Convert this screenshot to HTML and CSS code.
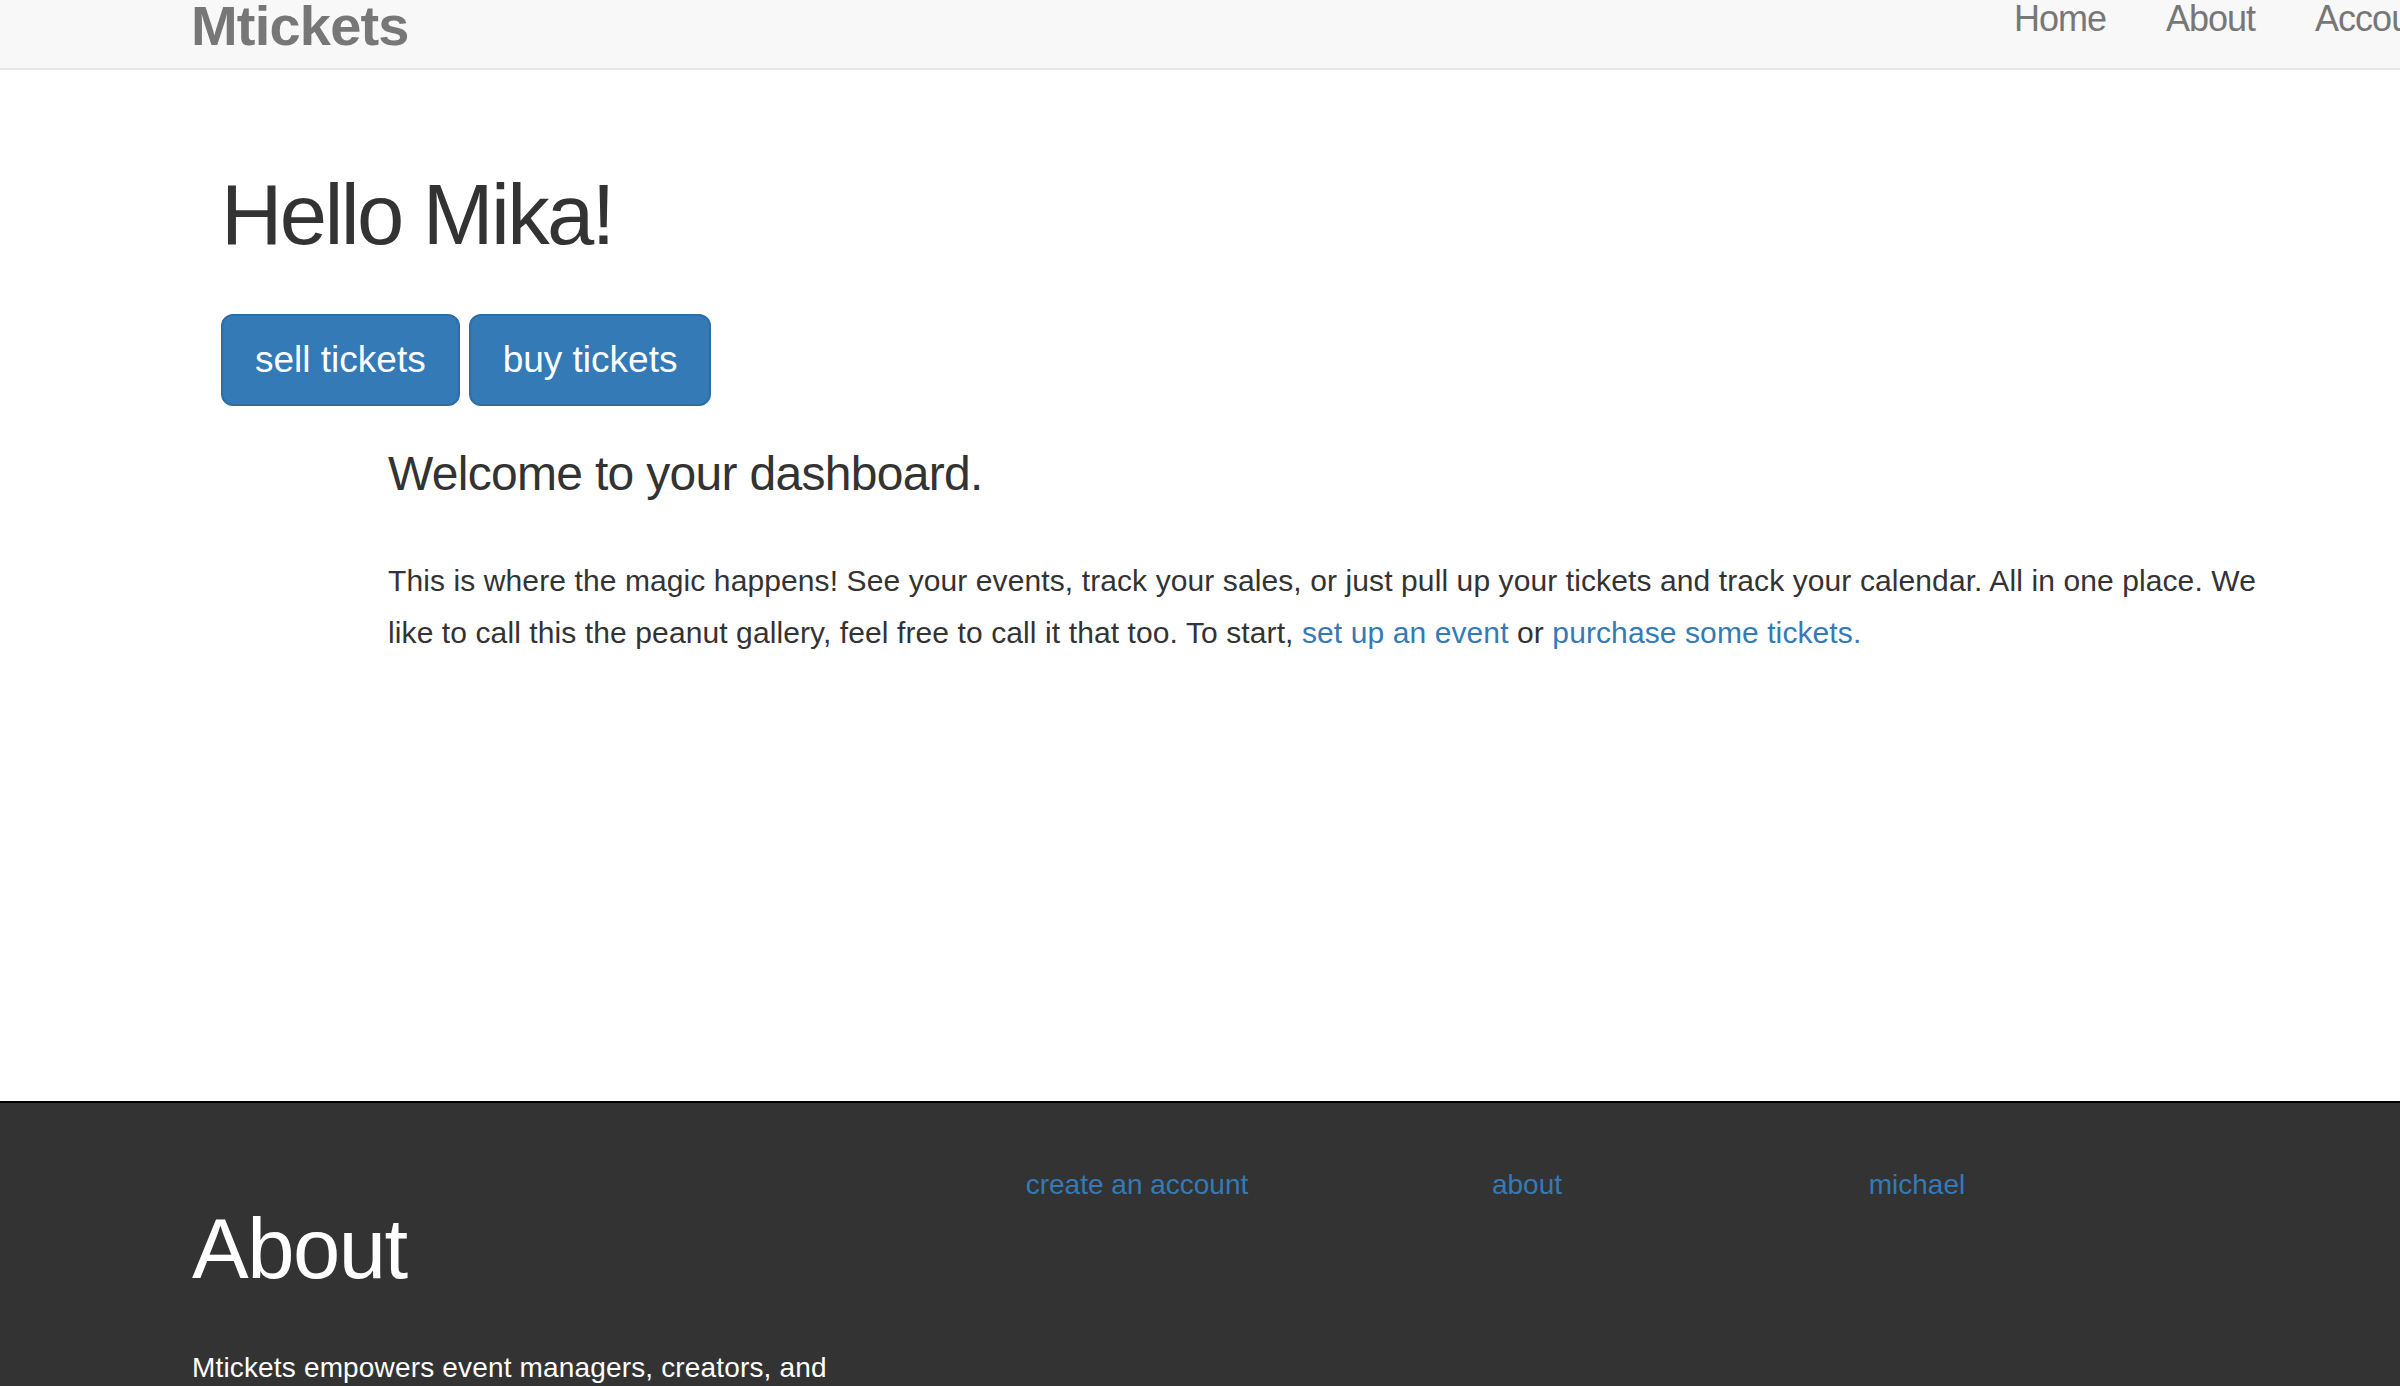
FILE: index.html
```html
<!DOCTYPE html>
<html lang="en">
<head>
<meta charset="utf-8">
<title>Mtickets</title>
<link rel="stylesheet" href="styles.css">
</head>
<body>
<header class="navbar">
  <div class="navbar-inner">
    <a class="brand" href="#">Mtickets</a>
    <ul class="nav">
      <li><a href="#">Home</a></li>
      <li><a href="#">About</a></li>
      <li><a href="#">Account</a></li>
    </ul>
  </div>
</header>
<main class="main">
  <h1 class="hello">Hello Mika!</h1>
  <div class="actions">
    <a class="btn" href="#">sell tickets</a>
    <a class="btn" href="#">buy tickets</a>
  </div>
  <section class="dashboard">
    <h3 class="dash-title">Welcome to your dashboard.</h3>
    <p class="dash-text">This is where the magic happens! See your events, track your sales, or just pull up your tickets and track your calendar. All in one place. We like to call this the peanut gallery, feel free to call it that too. To start, <a href="#">set up an event</a> or <a href="#">purchase some tickets.</a></p>
  </section>
</main>
<footer class="footer">
  <div class="footer-row">
    <div class="footer-about">
      <h1 class="footer-title">About</h1>
      <p class="footer-text">Mtickets empowers event managers, creators, and</p>
    </div>
    <div class="footer-col"><a href="#">create an account</a></div>
    <div class="footer-col"><a href="#">about</a></div>
    <div class="footer-col"><a href="#">michael</a></div>
  </div>
</footer>
</body>
</html>
```
FILE: styles.css
```css
html, body {
  margin: 0;
  padding: 0;
  overflow: hidden;
  background: #fff;
}
body {
  font-family: "Liberation Sans", Arial, Helvetica, sans-serif;
  color: #333;
  font-size: 28px;
}
a {
  text-decoration: none;
  color: #337ab7;
}

/* navbar */
.navbar {
  height: 68px;
  background: #f8f8f8;
  border-bottom: 2px solid #e7e7e7;
}
.navbar-inner {
  display: grid;
  grid-template-columns: 1793px max-content;
  align-items: start;
  padding-left: 191px;
}
.brand {
  justify-self: start;
  color: #777;
  font-weight: bold;
  font-size: 56px;
  line-height: 52px;
  letter-spacing: -0.8px;
}
.nav {
  display: flex;
  list-style: none;
  margin: 0;
  padding: 0;
}
.nav a {
  display: block;
  padding: 0 30px;
  color: #777;
  font-size: 36px;
  line-height: 38px;
  letter-spacing: -1px;
}

/* main */
.main {
  box-sizing: border-box;
  min-height: 1031px;
  padding: 98px 0 0 221px;
}
.hello {
  margin: 0;
  font-size: 85px;
  line-height: 94px;
  font-weight: normal;
  letter-spacing: -2.6px;
  color: #333;
}
.actions {
  display: flex;
  gap: 9px;
  margin-top: 52px;
}
.btn {
  display: block;
  padding: 20px 32px;
  font-size: 37px;
  line-height: 48px;
  color: #fff;
  background: #337ab7;
  border: 2px solid #2e6da4;
  border-radius: 12px;
}
.dashboard {
  margin-left: 167px;
  width: 1890px;
}
.dash-title {
  margin: 41px 0 0;
  font-size: 48px;
  line-height: 53px;
  font-weight: normal;
  letter-spacing: -0.7px;
}
.dash-text {
  margin: 55px 0 0;
  font-size: 30px;
  line-height: 51.5px;
  letter-spacing: 0.1px;
}

/* footer */
.footer {
  background: #333;
  border-top: 2px solid #000;
  color: #fff;
  min-height: 400px;
}
.footer-row {
  display: grid;
  grid-template-columns: 780px 390px 390px 390px;
  padding: 62px 0 0 162px;
}
.footer-about {
  padding: 0 30px;
}
.footer-title {
  margin: 36.6px 0 0;
  font-size: 85px;
  line-height: 94px;
  font-weight: normal;
  letter-spacing: -1.5px;
}
.footer-text {
  margin: 52px 0 0;
  font-size: 28px;
  line-height: 40px;
  letter-spacing: 0.16px;
}
.footer-col {
  text-align: center;
  font-size: 28px;
  line-height: 40px;
}
```
